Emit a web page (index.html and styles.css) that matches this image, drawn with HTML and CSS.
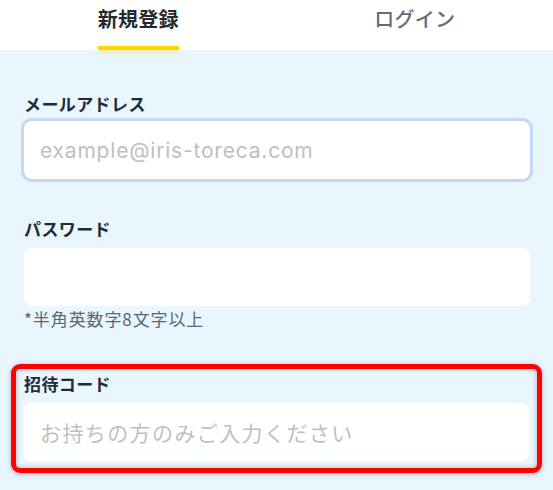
FILE: index.html
```html
<!DOCTYPE html>
<html lang="ja">
<head>
<meta charset="utf-8">
<title>新規登録</title>
<link rel="stylesheet" href="styles.css">
</head>
<body>
<nav class="tabs">
  <div class="tab tab--active">
    <div class="tab-inner">
      <span class="tab-label">新規登録</span>
      <span class="tab-bar"></span>
    </div>
  </div>
  <div class="tab">
    <div class="tab-inner">
      <span class="tab-label">ログイン</span>
    </div>
  </div>
</nav>
<main class="form">
  <div class="field field--email">
    <label class="field-label" for="email">メールアドレス</label>
    <input class="field-input field-input--focus" id="email" type="email" placeholder="example@iris-toreca.com">
  </div>
  <div class="field field--password">
    <label class="field-label" for="password">パスワード</label>
    <input class="field-input" id="password" type="password">
    <p class="field-hint">*半角英数字8文字以上</p>
  </div>
  <div class="field field--invite">
    <label class="field-label" for="invite">招待コード</label>
    <input class="field-input field-input--ja" id="invite" type="text" placeholder="お持ちの方のみご入力ください">
  </div>
</main>
</body>
</html>
```
FILE: styles.css
```css
* { box-sizing: border-box; }

html, body {
  margin: 0;
  padding: 0;
  background: #e9f6fe;
  font-family: "Noto Sans CJK JP", "Noto Sans", sans-serif;
}

.tabs {
  display: flex;
  height: 50px;
  background: #ffffff;
}

.tab {
  flex: 1;
  display: flex;
  justify-content: center;
  padding-top: 7px;
}

.tab-inner {
  display: flex;
  flex-direction: column;
  align-items: stretch;
}

.tab-label {
  font-size: 20px;
  line-height: 24px;
  font-weight: 500;
  color: #636d77;
  text-align: center;
  letter-spacing: 0.3px;
}

.tab--active .tab-label {
  font-weight: 700;
  color: #262a2e;
}

.tab-bar {
  display: block;
  height: 4px;
  margin-top: 15px;
  background: #ffd600;
  box-shadow: 0 2px 6px rgba(255, 214, 0, 0.45);
}

.form {
  padding: 44px 23px 40px 24px;
  background: #e9f6fe;
}

.field-label {
  display: block;
  font-size: 17px;
  line-height: 20px;
  font-weight: 700;
  color: #1e2b38;
  margin-bottom: 9px;
  letter-spacing: 0.4px;
}

.field-input {
  display: block;
  width: 100%;
  height: 58px;
  margin: 0;
  padding: 0 16px;
  border: none;
  border-radius: 8px;
  background: #ffffff;
  outline: none;
  font-family: "Inter", "Noto Sans CJK JP", sans-serif;
  font-size: 21px;
  color: #222;
  letter-spacing: 0.8px;
}

.field-input::placeholder {
  color: #bfbfbf;
}

.field-input--ja {
  font-family: "Noto Sans CJK JP", sans-serif;
  letter-spacing: 1.4px;
}

.field-input--focus {
  box-shadow: 0 0 0 3px #c6d6f5;
}

.field--email .field-label {
  margin-bottom: 7px;
}

.field--password {
  margin-top: 40px;
}

.field-hint {
  margin: 3px 0 0;
  font-size: 17px;
  line-height: 20px;
  color: #5c6670;
  letter-spacing: 0.9px;
}

.field--invite {
  margin: 35px -12px 0 -13px;
  padding: 5px 8px 7px 8px;
  border: 5px solid #ff0000;
  border-radius: 9px;
  box-shadow: 0 1px 5px rgba(40, 50, 60, 0.35), inset 0 0 5px rgba(40, 50, 60, 0.35);
}

.field--invite .field-input {
  box-shadow: 0 0 3px rgba(255, 255, 255, 0.6);
}
```
